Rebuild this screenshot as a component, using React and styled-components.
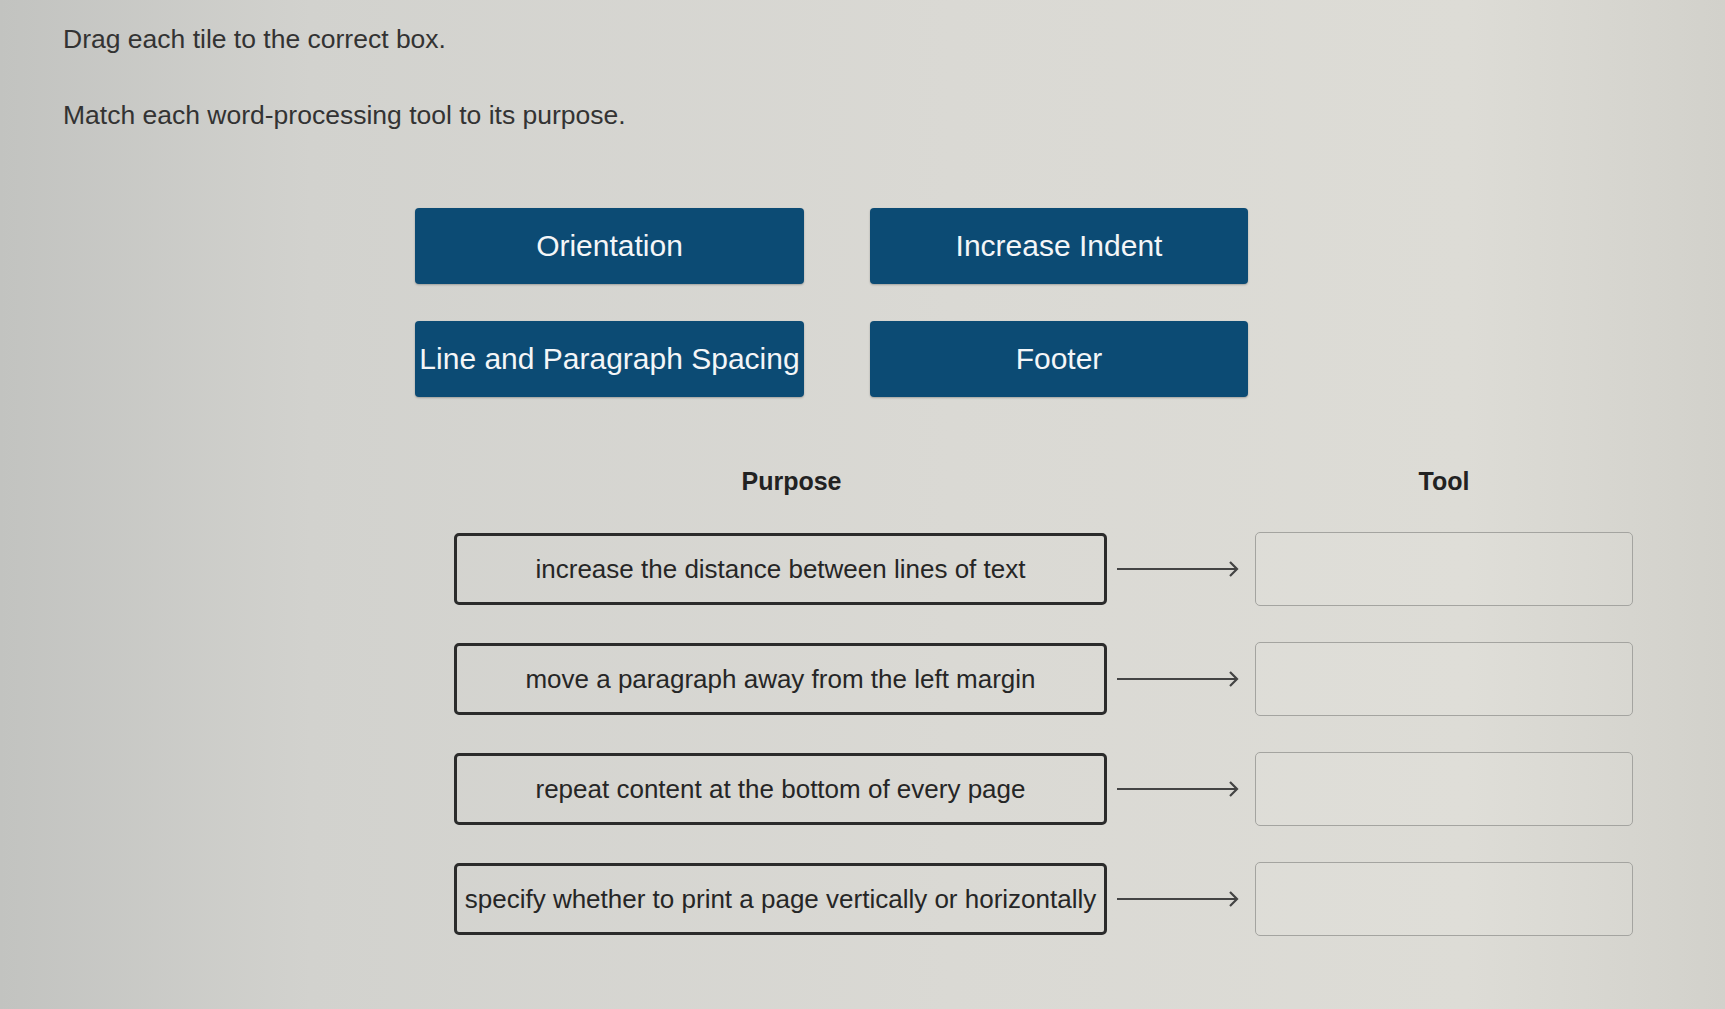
import React from 'react';
import styled, { createGlobalStyle } from 'styled-components';

const GlobalStyle = createGlobalStyle`
  html, body {
    margin: 0;
    padding: 0;
  }
  body {
    font-family: "Liberation Sans", Arial, sans-serif;
    background: linear-gradient(90deg, #c2c3c0 0%, #d2d2ce 18%, #dad9d4 55%, #dddcd6 85%, #d2d1cb 100%);
    min-height: 100vh;
  }
`;

const Page = styled.div`
  width: 1725px;
  height: 1009px;
  box-sizing: border-box;
  padding: 23px 0 0 63px;
  display: flex;
  flex-direction: column;
  color: #2a2a2a;
`;

const Prompt = styled.p`
  margin: 0 0 ${({ gap }) => gap}px;
  font-size: 26.5px;
  line-height: 32px;
  color: #333;
`;

const TileGrid = styled.div`
  margin: 77px 0 0 352px;
  display: grid;
  grid-template-columns: 389px 378px;
  column-gap: 66px;
  row-gap: 37px;
`;

const Tile = styled.div`
  height: 76px;
  border-radius: 4px;
  background: #0c4b74;
  color: #f4f6f8;
  font-size: 30px;
  display: flex;
  align-items: center;
  justify-content: center;
  white-space: nowrap;
  box-shadow: 0 1px 2px rgba(0, 0, 0, 0.25);
`;

const MatchTable = styled.div`
  margin: 70px 0 0 391px;
  display: grid;
  grid-template-columns: 653px 148px 378px;
  row-gap: 36px;
  align-items: center;
`;

const ColumnHead = styled.div`
  grid-column: ${({ col }) => col};
  text-align: center;
  font-weight: bold;
  font-size: 25px;
  color: #222;
  padding-left: ${({ shift }) => shift}px;
`;

const PurposeBox = styled.div`
  grid-column: 1;
  height: 72px;
  box-sizing: border-box;
  border: 3px solid #2b2b2b;
  border-radius: 5px;
  display: flex;
  align-items: center;
  justify-content: center;
  font-size: 26px;
  color: #262626;
  white-space: nowrap;
`;

const ArrowCell = styled.div`
  grid-column: 2;
  display: flex;
  align-items: center;
  justify-content: flex-start;
  padding-left: 10px;
`;

const DropBox = styled.div`
  grid-column: 3;
  height: 74px;
  box-sizing: border-box;
  border: 1.5px solid #a4a4a0;
  border-radius: 5px;
  background: rgba(255, 255, 255, 0.06);
`;

const Arrow = () => (
  <svg width="124" height="20" viewBox="0 0 124 20">
    <line x1="0" y1="10" x2="120" y2="10" stroke="#444" strokeWidth="2.2" />
    <polyline points="113,3 120,10 113,17" fill="none" stroke="#444" strokeWidth="2.2" />
  </svg>
);

const tiles = ['Orientation', 'Increase Indent', 'Line and Paragraph Spacing', 'Footer'];

const purposes = [
  'increase the distance between lines of text',
  'move a paragraph away from the left margin',
  'repeat content at the bottom of every page',
  'specify whether to print a page vertically or horizontally',
];

export default function App() {
  return (
    <>
      <GlobalStyle />
      <Page>
        <Prompt gap={44}>Drag each tile to the correct box.</Prompt>
        <Prompt gap={0}>Match each word-processing tool to its purpose.</Prompt>
        <TileGrid>
          {tiles.map(t => (
            <Tile key={t}>{t}</Tile>
          ))}
        </TileGrid>
        <MatchTable>
          <ColumnHead col={1} shift={22}>Purpose</ColumnHead>
          <ColumnHead col={3} shift={0}>Tool</ColumnHead>
          {purposes.map(p => (
            <React.Fragment key={p}>
              <PurposeBox>{p}</PurposeBox>
              <ArrowCell><Arrow /></ArrowCell>
              <DropBox />
            </React.Fragment>
          ))}
        </MatchTable>
      </Page>
    </>
  );
}
